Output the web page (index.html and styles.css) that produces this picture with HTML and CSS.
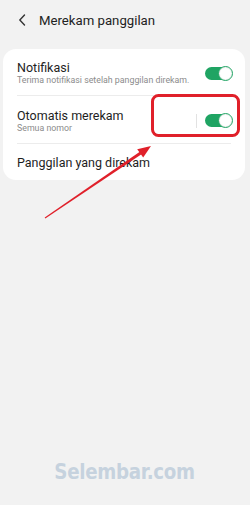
FILE: index.html
```html
<!DOCTYPE html>
<html lang="id">
<head>
<meta charset="utf-8">
<link rel="stylesheet" href="styles.css">
</head>
<body>
<div class="page">
  <header class="header">
    <svg class="back" width="8" height="12" viewBox="0 0 8 12"><path d="M6.5 1 L1.8 6 L6.5 11" fill="none" stroke="#333" stroke-width="1.4" stroke-linecap="round" stroke-linejoin="round"/></svg>
    <h1 class="title">Merekam panggilan</h1>
  </header>
  <section class="card">
    <div class="row row-1">
      <div class="texts">
        <div class="label">Notifikasi</div>
        <div class="sub">Terima notifikasi setelah panggilan direkam.</div>
      </div>
      <div class="toggle"><span class="knob"></span></div>
    </div>
    <div class="divider"></div>
    <div class="row row-2">
      <div class="texts">
        <div class="label">Otomatis merekam</div>
        <div class="sub">Semua nomor</div>
      </div>
      <span class="vsep"></span>
      <div class="toggle"><span class="knob"></span></div>
    </div>
    <div class="divider"></div>
    <div class="row row-3">
      <div class="label">Panggilan yang direkam</div>
    </div>
  </section>
  <div class="watermark"><span class="wm-text">Selembar.com</span></div>
  <svg class="annot" width="250" height="505" viewBox="0 0 250 505">
    <rect x="152.5" y="95.5" width="86" height="40" rx="6" fill="none" stroke="#e0202a" stroke-width="3"/>
    <polygon points="44.7,217.6 45.3,218.4 141.5,154.2 139.8,151.8" fill="#e0202a"/>
    <polygon points="151,146 137.2,149.2 143.2,157.6" fill="#e0202a"/>
  </svg>
</div>
</body>
</html>
```
FILE: styles.css
```css
* { box-sizing: border-box; }
html, body { margin: 0; padding: 0; }
body {
  background: #f2f2f2;
  font-family: Roboto, "Noto Sans", sans-serif;
  color: #1e1e1e;
  width: 250px;
  height: 505px;
  overflow: hidden;
}
.page { position: relative; width: 250px; height: 505px; }
.header {
  height: 40px;
  display: flex;
  align-items: center;
  padding-left: 18px;
}
.back { display: block; margin-right: 13px; }
.title {
  margin: 0;
  font-size: 13.2px;
  font-weight: 400;
  color: #222;
}
.card {
  margin: 9px 5px 0 3px;
  background: #fff;
  border-radius: 13px;
}
.row {
  display: flex;
  align-items: center;
  padding: 0 13px 0 14px;
}
.row-1 { height: 46px; padding-top: 2px; }
.row-2 { height: 47px; padding-top: 2px; }
.row-3 { height: 36px; padding-top: 1px; }
.texts { flex: 1; min-width: 0; }
.label {
  font-size: 12.5px;
  line-height: 15px;
  color: #1e1e1e;
}
.sub {
  font-size: 8.8px;
  line-height: 11px;
  color: #8c8c8c;
  white-space: nowrap;
}
.divider {
  height: 1px;
  background: #ececec;
  margin: 0 14px;
}
.vsep {
  width: 1px;
  height: 14px;
  background: #e2e2e2;
  margin-right: 8px;
}
.toggle {
  width: 27px;
  height: 13px;
  border-radius: 7px;
  background: #1fa463;
  position: relative;
  flex: none;
}
.knob {
  position: absolute;
  right: -1px;
  top: -1px;
  width: 15px;
  height: 15px;
  border-radius: 50%;
  background: #fff;
  border: 1.5px solid #1fa463;
  box-shadow: inset 0 0 0 1px #f0f0f0;
}
.watermark {
  margin-top: 279px;
  text-align: center;
  line-height: 26px;
}
.wm-text {
  display: inline-block;
  font-family: "DejaVu Sans", sans-serif;
  font-weight: 700;
  font-size: 22px;
  color: #c6d2de;
  letter-spacing: -0.4px;
  transform: scaleX(0.83);
}
.annot {
  position: absolute;
  left: 0;
  top: 0;
  pointer-events: none;
}
```
